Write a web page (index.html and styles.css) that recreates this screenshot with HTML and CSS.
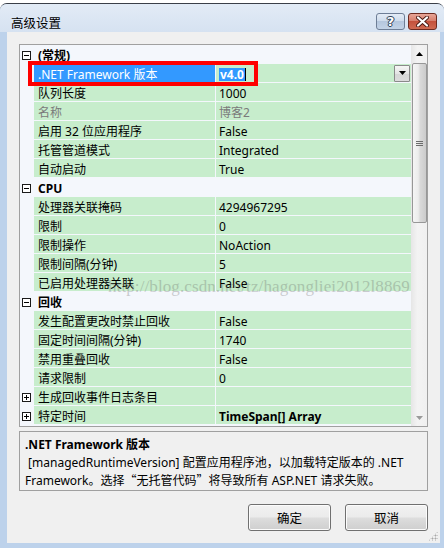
FILE: index.html
```html
<!DOCTYPE html>
<html lang="zh-CN">
<head>
<meta charset="utf-8">
<title>高级设置</title>
<link rel="stylesheet" href="styles.css">
</head>
<body>
<div class="window">
  <div class="titlebar">
    <span class="title">高级设置</span>
    <div class="caption-btns">
      <button class="cap help"><span>?</span></button>
      <button class="cap close">
        <svg width="13" height="11" viewBox="0 0 13 11"><path d="M2 1.5 L11 9.5 M11 1.5 L2 9.5" stroke="#4a1a14" stroke-width="4" stroke-linecap="round"/><path d="M2 1.5 L11 9.5 M11 1.5 L2 9.5" stroke="#ffffff" stroke-width="2.2" stroke-linecap="round"/></svg>
      </button>
    </div>
  </div>
  <div class="frame">
    <div class="client">
      <div class="pgrid">
        <div class="rows">
          <div class="cat"><span class="margin"><i class="box minus"></i></span><span class="cat-name">(常规)</span></div>
          <div class="row selected"><span class="margin"></span><span class="label">.NET Framework 版本</span><span class="value"><span class="edit"><span class="sel">v4.0</span><span class="caret"></span></span><span class="drop"><svg width="7" height="4" viewBox="0 0 7 4"><path d="M0 0H7L3.5 4Z" fill="#000"/></svg></span></span></div>
          <div class="row"><span class="margin"></span><span class="label">队列长度</span><span class="value">1000</span></div>
          <div class="row readonly"><span class="margin"></span><span class="label">名称</span><span class="value">博客2</span></div>
          <div class="row"><span class="margin"></span><span class="label">启用 32 位应用程序</span><span class="value">False</span></div>
          <div class="row"><span class="margin"></span><span class="label">托管管道模式</span><span class="value">Integrated</span></div>
          <div class="row"><span class="margin"></span><span class="label">自动启动</span><span class="value">True</span></div>
          <div class="cat"><span class="margin"><i class="box minus"></i></span><span class="cat-name">CPU</span></div>
          <div class="row"><span class="margin"></span><span class="label">处理器关联掩码</span><span class="value">4294967295</span></div>
          <div class="row"><span class="margin"></span><span class="label">限制</span><span class="value">0</span></div>
          <div class="row"><span class="margin"></span><span class="label">限制操作</span><span class="value">NoAction</span></div>
          <div class="row"><span class="margin"></span><span class="label">限制间隔(分钟)</span><span class="value">5</span></div>
          <div class="row"><span class="margin"></span><span class="label">已启用处理器关联</span><span class="value">False</span></div>
          <div class="cat"><span class="margin"><i class="box minus"></i></span><span class="cat-name">回收</span></div>
          <div class="row"><span class="margin"></span><span class="label">发生配置更改时禁止回收</span><span class="value">False</span></div>
          <div class="row"><span class="margin"></span><span class="label">固定时间间隔(分钟)</span><span class="value">1740</span></div>
          <div class="row"><span class="margin"></span><span class="label">禁用重叠回收</span><span class="value">False</span></div>
          <div class="row"><span class="margin"></span><span class="label">请求限制</span><span class="value">0</span></div>
          <div class="row"><span class="margin"><i class="box plus"></i></span><span class="label">生成回收事件日志条目</span><span class="value"></span></div>
          <div class="row"><span class="margin"><i class="box plus"></i></span><span class="label">特定时间</span><span class="value bold">TimeSpan[] Array</span></div>
        </div>
        <div class="vscroll">
          <div class="arrow up"><svg width="7" height="4" viewBox="0 0 7 4"><path d="M0 4H7L3.5 0Z" fill="#000"/></svg></div>
          <div class="thumb"><span class="grip"></span></div>
          <div class="track"></div>
          <div class="arrow down"><svg width="7" height="4" viewBox="0 0 7 4"><path d="M0 0H7L3.5 4Z" fill="#9a9a9a"/></svg></div>
        </div>
        <div class="redbox"></div>
        <div class="watermark">http://blog.csdn.net/tz/hagongliei2012l8869</div>
      </div>
      <div class="desc">
        <div class="desc-title">.NET Framework 版本</div>
        <div class="desc-text">&nbsp;[managedRuntimeVersion] 配置应用程序池，以加载特定版本的 .NET<br>Framework。选择<span class="cjk">“</span>无托管代码<span class="cjk">”</span>将导致所有 ASP.NET 请求失败。</div>
      </div>
      <div class="actions">
        <button class="btn">确定</button>
        <button class="btn">取消</button>
      </div>
      <div class="grip-corner"></div>
    </div>
  </div>
</div>
</body>
</html>
```
FILE: styles.css
```css
* { box-sizing: border-box; }
html, body { margin: 0; padding: 0; }
body {
  width: 444px;
  height: 548px;
  overflow: hidden;
  background: #ffffff;
  font-family: "Noto Sans", "Noto Sans CJK SC", sans-serif;
  font-size: 12px;
  color: #000;
}
.window {
  margin-top: 3px;
  width: 444px;
  height: 545px;
  border-top: 1px solid #3a3f48;
  border-radius: 7px 7px 0 0;
  overflow: hidden;
  background: #bdd2eb;
}
.titlebar {
  height: 28px;
  display: flex;
  justify-content: space-between;
  align-items: flex-start;
  background: linear-gradient(#e2ebf6, #d6e2f1);
}
.title {
  padding: 11px 0 0 11px;
  line-height: 16px;
  font-family: "Noto Sans CJK SC", sans-serif;
  font-size: 12.5px;
  color: #000;
}
.caption-btns {
  display: flex;
  gap: 3px;
  margin: 9px 7px 0 0;
}
.cap {
  width: 29px;
  height: 17px;
  padding: 0;
  border-radius: 3px;
  display: flex;
  align-items: center;
  justify-content: center;
}
.help {
  border: 1px solid #6e7e96;
  background: linear-gradient(#e4ecf6 0%, #cfdcec 45%, #b5c7de 50%, #c3d3e7 100%);
}
.help span {
  font-family: "DejaVu Sans", sans-serif;
  font-weight: bold;
  font-size: 13px;
  line-height: 13px;
  color: #ffffff;
  text-shadow: 0 0 1px #33425a, 0 0 1px #33425a, 1px 0 0 #33425a, -1px 0 0 #33425a, 0 1px 0 #33425a, 0 -1px 0 #33425a;
}
.close {
  border: 1px solid #6c2a20;
  background: linear-gradient(#e8a597 0%, #d77f6d 45%, #c4513c 50%, #cf6a52 100%);
}
.frame {
  height: 516px;
  padding: 0 4px 5px 7px;
}
.client {
  position: relative;
  height: 511px;
  background: #f0f0f0;
  padding: 12px;
}
.pgrid {
  position: relative;
  height: 383px;
  border: 1px solid #a0a0a0;
  display: flex;
  background: #f4f7fc;
  overflow: hidden;
}
.rows {
  flex: 1;
  display: flex;
  flex-direction: column;
}
.row, .cat {
  height: 19px;
  flex: none;
  line-height: 15px;
  white-space: nowrap;
}
.row {
  display: grid;
  grid-template-columns: 14px 182px 1fr;
  border-bottom: 1px solid #f4f7fc;
}
.cat {
  display: flex;
  background: #f4f7fc;
}
.margin {
  width: 14px;
  flex: none;
  position: relative;
  background: #f4f7fc;
}
.cat-name {
  padding: 3px 0 0 4px;
  font-weight: bold;
}
.label {
  padding: 3px 0 0 4px;
  background: #c7edcc;
  border-right: 1px solid #f4f7fc;
}
.value {
  padding: 3px 0 0 3px;
  background: #c7edcc;
}
.value.bold { font-weight: bold; }
.readonly .label, .readonly .value { color: #7a7a7a; }
.selected .label {
  background: #3399ff;
  color: #ffffff;
}
.selected .value {
  display: flex;
  align-items: center;
  justify-content: space-between;
  padding: 0 1px 0 3px;
}
.edit {
  display: flex;
  align-items: center;
  padding-top: 2px;
}
.sel {
  background: #3399ff;
  color: #fff;
  font-weight: bold;
  line-height: 13px;
  padding: 0 1px;
}
.caret {
  width: 1px;
  height: 13px;
  background: #000;
}
.drop {
  width: 16px;
  height: 17px;
  border: 1px solid #8a8a8a;
  border-radius: 1px;
  background: linear-gradient(#f6f6f6, #e4e4e4 50%, #d6d6d6 51%, #dcdcdc);
  display: flex;
  align-items: center;
  justify-content: center;
}
.box {
  position: absolute;
  left: 2px;
  top: 6px;
  width: 9px;
  height: 9px;
  border: 1px solid #1a1a1a;
  background: #fff;
}
.box::before {
  content: "";
  position: absolute;
  left: 1px;
  top: 3px;
  width: 5px;
  height: 1px;
  background: #000;
}
.plus::after {
  content: "";
  position: absolute;
  left: 3px;
  top: 1px;
  width: 1px;
  height: 5px;
  background: #000;
}
.vscroll {
  width: 16px;
  flex: none;
  display: flex;
  flex-direction: column;
  background: linear-gradient(to right, #e6e6e6, #f3f3f3 40%, #f0f0f0);
}
.arrow {
  height: 17px;
  display: flex;
  align-items: center;
  justify-content: center;
  flex: none;
}
.thumb {
  height: 160px;
  flex: none;
  margin: 1px 0 0 1px;
  border: 1px solid #979797;
  border-radius: 2px;
  background: linear-gradient(to right, #f5f5f5, #ececec 40%, #d9d9d9 55%, #cbcbcb);
  display: flex;
  align-items: center;
  justify-content: center;
}
.grip {
  width: 7px;
  height: 5px;
  border-top: 1px solid #6b6b6b;
  border-bottom: 1px solid #6b6b6b;
  position: relative;
}
.grip::after {
  content: "";
  position: absolute;
  left: 0;
  right: 0;
  top: 1px;
  height: 1px;
  background: #6b6b6b;
}
.track { flex: 1; }
.redbox {
  position: absolute;
  left: 8px;
  top: 16px;
  width: 230px;
  height: 25px;
  border: 4px solid #ff0000;
}
.watermark {
  position: absolute;
  left: 88px;
  top: 232px;
  font-family: "Liberation Serif", serif;
  font-size: 17px;
  letter-spacing: 0.1px;
  color: #5a5a5a;
  opacity: 0.28;
  white-space: nowrap;
  pointer-events: none;
}
.desc {
  margin-top: 4px;
  height: 60px;
  border: 1px solid #a0a0a0;
  padding: 4px 0 0 5px;
  white-space: nowrap;
}
.desc-title {
  line-height: 17px;
  font-weight: bold;
}
.desc-text {
  line-height: 17px;
  padding-top: 1px;
}
.cjk {
  font-family: "Noto Sans CJK SC", sans-serif;
}
.actions {
  margin-top: 13px;
  display: flex;
  justify-content: flex-end;
  gap: 14px;
}
.btn {
  width: 83px;
  height: 27px;
  border: 1px solid #707070;
  border-radius: 3px;
  background: linear-gradient(#f2f2f2 0%, #ebebeb 48%, #dddddd 52%, #cfcfcf 100%);
  font-family: "Noto Sans CJK SC", sans-serif;
  font-size: 12.5px;
  color: #000;
  padding: 0;
  box-shadow: inset 0 0 0 1px #fcfcfc;
}
.grip-corner {
  position: absolute;
  right: 2px;
  bottom: 2px;
  width: 10px;
  height: 10px;
  background-image: radial-gradient(circle, #a8a8a8 0.8px, transparent 1.2px);
  background-size: 3px 3px;
  clip-path: polygon(100% 0, 100% 100%, 0 100%);
}
```
